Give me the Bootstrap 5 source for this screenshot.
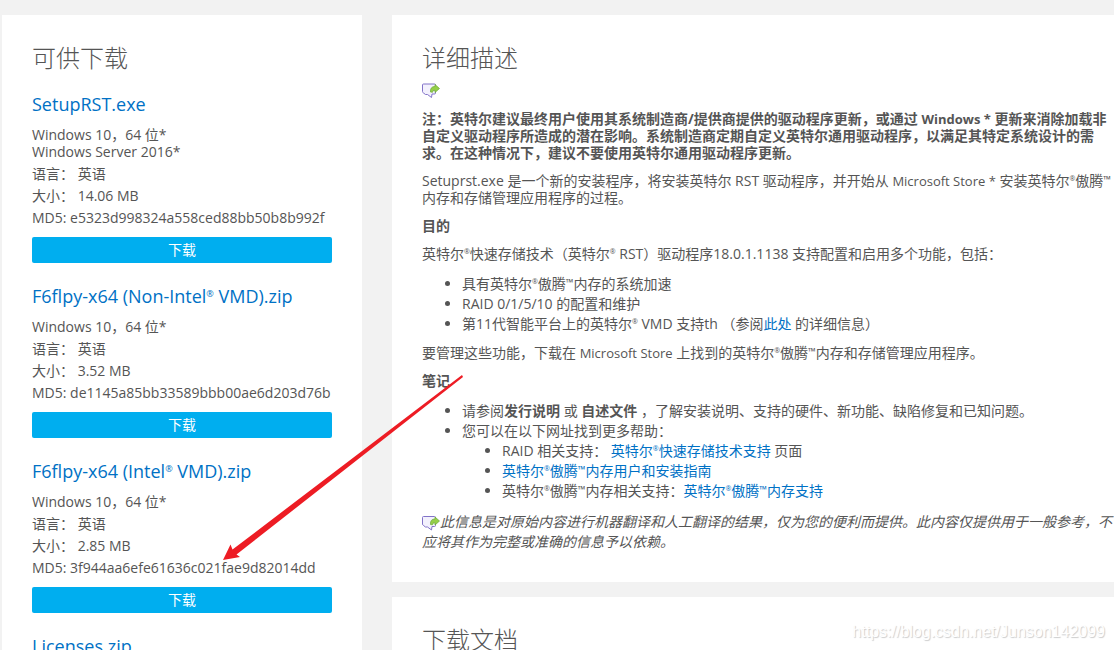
<!DOCTYPE html>
<html lang="zh-CN">
<head>
<meta charset="utf-8">
<meta name="viewport" content="width=device-width, initial-scale=1">
<title>下载</title>
<link href="https://cdn.jsdelivr.net/npm/bootstrap@5.3.0/dist/css/bootstrap.min.css" rel="stylesheet">
<script src="https://cdn.jsdelivr.net/npm/bootstrap@5.3.0/dist/js/bootstrap.bundle.min.js" defer></script>
<style>
body { background: #f2f2f2; color: #555; font: 14px/17px "Open Sans", "Noto Sans CJK SC", sans-serif; overflow: hidden; }
a { color: #0071c5; text-decoration: none; }
.page-wrap { padding: 15px 0 0 2px; gap: 30px; height: 100vh; overflow: hidden; }
.panel { background: #fff; padding: 29px 30px 30px; }
.downloads { flex: 0 0 360px; align-self: flex-start; }
.details { gap: 15px; min-width: 0; }
.details .panel { padding-right: 0; }
h2 { font-size: 24px; line-height: 28px; font-weight: 300; margin: 0; }
.downloads h2 { margin-bottom: 21px; }
h3 { font-size: 18px; line-height: 22px; font-weight: 400; margin: 0 0 11px; }
.file-item { margin-bottom: 22px; }
.file-item p { margin: 0 0 5px; white-space: nowrap; }
.btn-get { background: #00aeef; color: #fff; font-size: 14px; line-height: 18px; padding: 4px; border: 0; border-radius: 2px; margin-top: 11px; }
.btn-get:hover { background: #0095d0; color: #fff; }
.details p { margin: 0 0 11px; }
.details ul { line-height: 20px; padding-left: 40px; margin: 12px 0 10px; }
.details ul ul { margin: 0; list-style-type: disc; }
.details .flag-row { margin-top: 10px; }
.details .flag-row .flag { height: 17px; }
.details .note { line-height: 20px; margin: 11px 0 0; }
.product { font-size: 13px; line-height: 1; }
.reg { font-size: 7px; line-height: 1; vertical-align: 5px; }
.tm { font-size: 10px; line-height: 1; vertical-align: 3px; }
h3 .reg { font-size: 9px; vertical-align: 6px; }
.flag { width: 18px; height: 16px; vertical-align: -4px; }
.pointer { left: 223px; top: 375px; pointer-events: none; }
.watermark { right: 9px; bottom: 9px; font: 16px/18px "Liberation Sans", sans-serif; color: #fff; text-shadow: 1px 1px 1px #ccc; }
</style>
</head>
<body class="position-relative">
<svg class="d-none" aria-hidden="true">
  <symbol id="translated" viewBox="0 0 18 16">
    <path d="M1.500 1.500h11q1 0 1 1v8q0 1-1 1h-2.500l-.5 3.500-4-3h-2l-2-1.500q-1-.5-1-1.500v-6.500q0-1 1-1z" fill="#f3f1fd" stroke="#8273c8" stroke-linejoin="round"/>
    <path d="M8.500 9.500q-.5-5.500 4.500-5.500v-2l4.500 4-4.500 4v-2.200q-2.500-.3-2.500 2z" fill="#95cf48" stroke="#6aa834" stroke-width=".7" stroke-linejoin="round"/>
  </symbol>
</svg>
<main class="page-wrap d-flex">
  <section class="panel downloads">
    <h2>可供下载</h2>
    <div class="file-item">
      <h3><a href="#">SetupRST.exe</a></h3>
      <p>Windows 10，64 位*<br>Windows Server 2016*</p>
      <p>语言： 英语</p>
      <p>大小： 14.06 MB</p>
      <p>MD5: e5323d998324a558ced88bb50b8b992f</p>
      <button type="button" class="btn btn-get w-100 d-block">下载</button>
    </div>
    <div class="file-item">
      <h3><a href="#">F6flpy-x64 (Non-Intel<span class="reg">®</span> VMD).zip</a></h3>
      <p>Windows 10，64 位*</p>
      <p>语言： 英语</p>
      <p>大小： 3.52 MB</p>
      <p>MD5: de1145a85bb33589bbb00ae6d203d76b</p>
      <button type="button" class="btn btn-get w-100 d-block">下载</button>
    </div>
    <div class="file-item">
      <h3><a href="#">F6flpy-x64 (Intel<span class="reg">®</span> VMD).zip</a></h3>
      <p>Windows 10，64 位*</p>
      <p>语言： 英语</p>
      <p>大小： 2.85 MB</p>
      <p>MD5: 3f944aa6efe61636c021fae9d82014dd</p>
      <button type="button" class="btn btn-get w-100 d-block">下载</button>
    </div>
    <div class="file-item">
      <h3><a href="#">Licenses.zip</a></h3>
    </div>
  </section>
  <div class="details d-flex flex-column flex-grow-1">
    <section class="panel">
      <h2>详细描述</h2>
      <p class="flag-row"><svg class="flag d-block" aria-hidden="true"><use href="#translated"/></svg></p>
      <p><strong>注：英特尔建议最终用户使用其系统制造商/提供商提供的驱动程序更新，或通过 <span class="product">Windows *</span> 更新来消除加载非自定义驱动程序所造成的潜在影响。系统制造商定期自定义英特尔通用驱动程序，以满足其特定系统设计的需求。在这种情况下，建议不要使用英特尔通用驱动程序更新。</strong></p>
      <p>Setuprst.exe 是一个新的安装程序，将安装英特尔 RST 驱动程序，并开始从 <span class="product">Microsoft Store *</span> 安装英特尔<span class="reg">®</span>傲腾<span class="tm">™</span>内存和存储管理应用程序的过程。</p>
      <p><strong>目的</strong></p>
      <p>英特尔<span class="reg">®</span>快速存储技术（英特尔<span class="reg">®</span> RST）驱动程序18.0.1.1138 支持配置和启用多个功能，包括：</p>
      <ul>
        <li>具有英特尔<span class="reg">®</span>傲腾<span class="tm">™</span>内存的系统加速</li>
        <li>RAID 0/1/5/10 的配置和维护</li>
        <li>第11代智能平台上的英特尔<span class="reg">®</span> VMD 支持th （参阅<a href="#">此处</a> 的详细信息）</li>
      </ul>
      <p>要管理这些功能，下载在 <span class="product">Microsoft Store</span> 上找到的英特尔<span class="reg">®</span>傲腾<span class="tm">™</span>内存和存储管理应用程序。</p>
      <p><strong>笔记</strong></p>
      <ul>
        <li>请参阅<strong>发行说明</strong> 或 <strong>自述文件</strong> ，了解安装说明、支持的硬件、新功能、缺陷修复和已知问题。</li>
        <li>您可以在以下网址找到更多帮助：
          <ul>
            <li>RAID 相关支持： <a href="#">英特尔<span class="reg">®</span>快速存储技术支持</a> 页面</li>
            <li><a href="#">英特尔<span class="reg">®</span>傲腾<span class="tm">™</span>内存用户和安装指南</a></li>
            <li>英特尔<span class="reg">®</span>傲腾<span class="tm">™</span>内存相关支持：<a href="#">英特尔<span class="reg">®</span>傲腾<span class="tm">™</span>内存支持</a></li>
          </ul>
        </li>
      </ul>
      <p class="note"><svg class="flag" aria-hidden="true"><use href="#translated"/></svg><em>此信息是对原始内容进行机器翻译和人工翻译的结果，仅为您的便利而提供。此内容仅提供用于一般参考，不应将其作为完整或准确的信息予以依赖。</em></p>
    </section>
    <section class="panel flex-grow-1">
      <h2>下载文档</h2>
    </section>
  </div>
</main>
<svg class="pointer position-absolute" width="242" height="186" viewBox="0 0 242 186" aria-hidden="true">
  <path d="M0 185L7.500 169.500l2 5L239 0l1 2L13.500 179.500l3.500 2.500z" fill="#ed1c24"/>
</svg>
<div class="watermark position-absolute">https://blog.csdn.net/Junson142099</div>
</body>
</html>
